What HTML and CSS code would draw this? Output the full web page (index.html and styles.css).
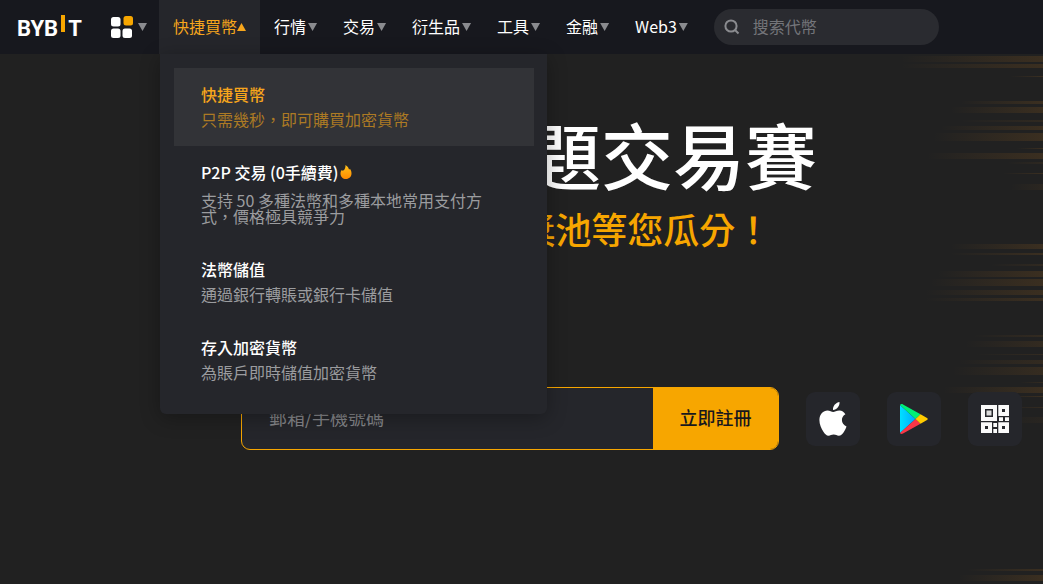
FILE: index.html
```html
<!DOCTYPE html>
<html lang="zh-Hant">
<head>
  <meta charset="UTF-8" />
  <meta name="viewport" content="width=device-width, initial-scale=1.0"/>
  <title>Bybit</title>
  <link rel="stylesheet" href="styles.css">
</head>
<body>
  <header class="header">
    <a class="logo" href="#" aria-label="BYBIT">BYB<span class="logo-bar"></span>T</a>
    <button class="apps" type="button" aria-label="產品">
      <svg width="22" height="22" viewBox="0 0 22 22">
        <rect x="0" y="1" width="9.500" height="9.500" rx="2.500" fill="#fff"/>
        <rect x="12.500" y="0" width="9.500" height="9.500" rx="2.500" fill="#f7a600"/>
        <rect x="0" y="12.500" width="9.500" height="9.500" rx="2.500" fill="#fff"/>
        <rect x="11.500" y="12.500" width="9.500" height="9.500" rx="2.500" fill="#fff"/>
      </svg>
      <span class="arrow"></span>
    </button>

    <nav class="nav">
      <div class="nav-item active">
        <a class="nav-link" href="#">快捷買幣<span class="arrow up"></span></a>
        <div class="dropdown">
          <a class="drop-item selected" href="#">
            <span class="drop-title">快捷買幣</span>
            <span class="drop-desc">只需幾秒，即可購買加密貨幣</span>
          </a>
          <a class="drop-item" href="#">
            <span class="drop-title hot">P2P 交易 (0手續費)
              <svg width="12" height="14" viewBox="0 0 12 14">
                <defs>
                  <linearGradient id="fire" x1="0" y1="0" x2="0" y2="1">
                    <stop offset="0" stop-color="#ffc21a"/>
                    <stop offset="1" stop-color="#ff8a00"/>
                  </linearGradient>
                </defs>
                <path d="M5.500 0C8 1.500 8.700 3 9 4.500C9.500 4.500 9.800 4.200 10 3.800C11 5.300 11.500 6.800 11.500 8.500C11.500 11.700 9 14 6 14C2.900 14 .500 11.700 .500 8.700C.500 7 1 6 1.800 5C2.200 5.600 2.700 5.800 3.300 5.600C4.900 4.600 5.600 2.400 5.500 0Z" fill="url(#fire)"/>
              </svg>
            </span>
            <span class="drop-desc">支持 50 多種法幣和多種本地常用支付方式，價格極具競爭力</span>
          </a>
          <a class="drop-item" href="#">
            <span class="drop-title">法幣儲值</span>
            <span class="drop-desc">通過銀行轉賬或銀行卡儲值</span>
          </a>
          <a class="drop-item" href="#">
            <span class="drop-title">存入加密貨幣</span>
            <span class="drop-desc">為賬戶即時儲值加密貨幣</span>
          </a>
        </div>
      </div>
      <div class="nav-item"><a class="nav-link" href="#">行情<span class="arrow"></span></a></div>
      <div class="nav-item"><a class="nav-link" href="#">交易<span class="arrow"></span></a></div>
      <div class="nav-item"><a class="nav-link" href="#">衍生品<span class="arrow"></span></a></div>
      <div class="nav-item"><a class="nav-link" href="#">工具<span class="arrow"></span></a></div>
      <div class="nav-item"><a class="nav-link" href="#">金融<span class="arrow"></span></a></div>
      <div class="nav-item"><a class="nav-link" href="#">Web3<span class="arrow"></span></a></div>
    </nav>

    <label class="search">
      <svg width="16" height="16" viewBox="0 0 16 16" fill="none" stroke="#8a8b8f" stroke-width="2">
        <circle cx="7" cy="7" r="5.600"/>
        <path d="M11 11L14.500 14.500"/>
      </svg>
      <input type="search" placeholder="搜索代幣" aria-label="搜索代幣">
    </label>
  </header>

  <main class="hero">
    <svg class="streaks" width="143" height="530" viewBox="0 0 143 530" aria-hidden="true">
      <defs>
        <linearGradient id="streak">
          <stop offset="0" stop-color="#f7931a" stop-opacity="0"/>
          <stop offset="1" stop-color="#f7931a" stop-opacity=".12"/>
        </linearGradient>
      </defs>
      <g fill="url(#streak)">
        <rect x="0" y="2" width="143" height="6"/>
        <rect x="0" y="10" width="143" height="4"/>
        <rect x="110" y="22" width="33" height="1"/>
        <rect x="60" y="47" width="83" height="3"/>
        <rect x="50" y="53" width="93" height="6"/>
        <rect x="60" y="66" width="83" height="2" opacity=".6"/>
        <rect x="40" y="72" width="103" height="4"/>
        <rect x="33" y="79" width="110" height="8"/>
        <rect x="117" y="94" width="26" height="1"/>
        <rect x="27" y="99" width="116" height="6"/>
        <rect x="107" y="108" width="36" height="2" opacity=".5"/>
        <rect x="103" y="119" width="40" height="1"/>
        <rect x="110" y="130" width="33" height="6" opacity=".4"/>
        <rect x="50" y="190" width="93" height="5"/>
        <rect x="50" y="199" width="93" height="2"/>
        <rect x="90" y="210" width="53" height="2" opacity=".6"/>
        <rect x="37" y="217" width="106" height="6"/>
        <rect x="30" y="225" width="113" height="7"/>
        <rect x="25" y="236" width="118" height="5"/>
        <rect x="25" y="244" width="118" height="3"/>
        <rect x="73" y="281" width="70" height="2" opacity=".7"/>
        <rect x="65" y="287" width="78" height="6" opacity=".7"/>
        <rect x="75" y="300" width="68" height="1" opacity=".7"/>
        <rect x="58" y="306" width="85" height="4" opacity=".7"/>
        <rect x="52" y="313" width="91" height="8" opacity=".8"/>
        <rect x="120" y="328" width="23" height="1" opacity=".7"/>
        <rect x="43" y="333" width="100" height="6"/>
        <rect x="100" y="342" width="43" height="1"/>
        <rect x="100" y="353" width="43" height="1" opacity=".7"/>
        <rect x="100" y="363" width="43" height="6" opacity=".3"/>
        <rect x="67" y="515" width="76" height="2"/>
        <rect x="58" y="521" width="85" height="6"/>
      </g>
    </svg>

    <h1>新幣種主題交易賽</h1>
    <p class="subtitle">1,000,000 BUSD 獎池等您瓜分！</p>

    <div class="actions">
      <form class="signup">
        <input type="text" placeholder="郵箱/手機號碼" aria-label="郵箱/手機號碼">
        <button type="submit">立即註冊</button>
      </form>
      <a class="store" href="#" aria-label="App Store">
        <svg width="28" height="34" viewBox="0 0 28 34" fill="#fff">
          <path d="M20.500 0C20.700 2 20 4 18.700 5.500C17.500 7 15.700 8 14 7.900C13.800 6 14.600 4 15.800 2.600C17 1.200 19 .200 20.500 0Z"/>
          <path d="M26.400 12.200C24.200 13.500 22.900 15.500 22.900 18.100C22.900 21 24.600 23.300 27.500 24.400C26.900 26.500 25.800 28.600 24.500 30.400C23.200 32.200 21.900 33.700 19.800 33.700C17.700 33.700 17.100 32.500 14.700 32.500C12.300 32.500 11.500 33.700 9.500 33.700C7.400 33.700 6 32 4.600 30C2.200 26.700 .400 22.500 .400 18.100C.400 12 4.400 8.500 8.500 8.500C10.800 8.500 12.700 10 14.200 10C15.600 10 17.700 8.400 20.500 8.400C22.900 8.400 25 9.900 26.400 12.200Z"/>
        </svg>
      </a>
      <a class="store" href="#" aria-label="Google Play">
        <svg width="28" height="30" viewBox="0 0 28 30">
          <defs>
            <linearGradient id="play" x1="0" y1="0" x2="1" y2="0">
              <stop offset="0" stop-color="#00e1ff"/>
              <stop offset="1" stop-color="#00a8ff"/>
            </linearGradient>
          </defs>
          <path d="M0 1V29L15.500 15Z" fill="url(#play)"/>
          <path d="M0 1C.500 0 2 -.200 3 .500L20.500 10.300L15.500 15Z" fill="#00f076"/>
          <path d="M0 29C.500 30.200 2 30.200 3 29.500L20.500 19.700L15.500 15Z" fill="#f93647"/>
          <path d="M20.500 10.300L27 14C28 14.600 28 15.400 27 16L20.500 19.700L15.500 15Z" fill="#ffcb00"/>
        </svg>
      </a>
      <a class="store" href="#" aria-label="QR Code">
        <svg width="28" height="28" viewBox="0 0 28 28">
          <path d="M0 0H16V16H0ZM17.300 0H28V11H17.300ZM0 17.300H11V28H0ZM17.300 17.300H28V28H17.300ZM18 12.300H22V16H18ZM24 12.300H28V16H24ZM12.300 18H16V22H12.300ZM12.300 24H16V28H12.300Z" fill="#fafafa"/>
          <path d="M4 4H12V12H4ZM21 4H24V7H21ZM4 21H7V24H4ZM21 21H24V24H21Z" fill="#25262b"/>
          <path d="M5.500 5.500H10.500V10.500H5.500Z" fill="#dcdcdc"/>
        </svg>
      </a>
    </div>
  </main>
</body>
</html>
```
FILE: styles.css
```css
* {
  box-sizing: border-box;
}
body {
  display: flex;
  flex-direction: column;
  min-height: 100vh;
  margin: 0;
  background-color: #212121;
  color: #fff;
  font-family: "Noto Sans CJK TC", sans-serif;
  font-size: 16px;
}
a {
  color: inherit;
  text-decoration: none;
}
button, input {
  font-family: inherit;
  border: none;
}
.header {
  display: flex;
  align-items: center;
  height: 54px;
  padding-left: 17px;
  background-color: #17181e;
}
.logo {
  display: flex;
  align-items: center;
  width: 94px;
  padding-top: 4px;
  font-family: Roboto, sans-serif;
  font-size: 22px;
  font-weight: 700;
  line-height: 26px;
}
.logo-bar {
  width: 4px;
  height: 17px;
  margin: 0 3px 12px 3px;
  background-color: #f7a600;
}
.apps {
  display: flex;
  align-items: center;
  gap: 5px;
  width: 48px;
  padding: 0;
  background: none;
  cursor: pointer;
}
.arrow {
  width: 9px;
  height: 8px;
  background-color: #8a8b8f;
  clip-path: polygon(0 0, 100% 0, 50% 100%);
}
.arrow.up {
  background-color: #f7a61c;
  clip-path: polygon(50% 0, 100% 100%, 0 100%);
}
.nav {
  display: flex;
  height: 100%;
}
.nav-item {
  position: relative;
}
.nav-link {
  display: flex;
  align-items: center;
  gap: 2px;
  height: 100%;
  padding: 0 12px 2px 14px;
  white-space: nowrap;
}
.nav-link .arrow {
  margin-top: 2px;
}
.active {
  background-color: #25262b;
}
.active .nav-link {
  gap: 0;
  padding-right: 14px;
  color: #f7a61c;
}
.search {
  display: flex;
  align-items: center;
  gap: 13px;
  width: 225px;
  height: 36px;
  margin-left: 14px;
  padding: 0 10px;
  border-radius: 18px;
  background-color: #2a2b30;
}
.search svg {
  flex-shrink: 0;
}
.search input {
  width: 100%;
  padding: 0 0 2px;
  background: none;
  color: #fff;
  font-size: 16px;
  outline: none;
}
.search input::placeholder {
  color: #74757a;
}

/* dropdown under the active nav item */
.dropdown {
  position: absolute;
  top: 100%;
  left: 1px;
  z-index: 10;
  width: 387px;
  padding: 14px 13px 15px 14px;
  border-radius: 0 0 6px 6px;
  background-color: #25262b;
  box-shadow: 0 4px 20px rgba(0, 0, 0, 0.3);
}
.drop-item {
  display: flex;
  flex-direction: column;
  gap: 8px;
  padding: 17px 27px 19px;
}
.drop-title {
  font-weight: 500;
  line-height: 18px;
}
.hot {
  display: flex;
  align-items: center;
  gap: 1px;
  height: 18px;
  margin-bottom: 3px;
}
.drop-desc {
  max-width: 290px;
  color: #9b9c9f;
  line-height: 16px;
}
.selected {
  background-color: #323337;
}
.selected .drop-title {
  color: #f7a61c;
}
.selected .drop-desc {
  color: #ac7a24;
}

.hero {
  position: relative;
  flex: 1;
  padding: 55px 21px 55px 241px;
  overflow: hidden;
}
.streaks {
  position: absolute;
  top: 0;
  right: 0;
}
h1 {
  margin: 0;
  font-size: 72px;
  font-weight: 500;
  line-height: 88px;
  white-space: nowrap;
}
.subtitle {
  margin: 9px 0 137px;
  color: #f7a600;
  font-size: 36px;
  font-weight: 500;
  line-height: 44px;
  white-space: nowrap;
}
.actions {
  position: relative;
  display: flex;
  align-items: center;
  gap: 27px;
}
.signup {
  display: flex;
  flex: 1;
  max-width: 538px;
  height: 63px;
  border: 1px solid #f7a600;
  border-radius: 9px;
  background-color: #25262b;
  overflow: hidden;
}
.signup input {
  flex: 1;
  min-width: 0;
  padding: 0 27px 3px;
  background: none;
  color: #fff;
  font-size: 18px;
  outline: none;
}
.signup input::placeholder {
  color: #85868a;
}
.signup button {
  width: 125px;
  padding: 0 0 3px;
  background-color: #f7a600;
  color: #17181e;
  font-size: 18px;
  font-weight: 500;
  cursor: pointer;
}
.store {
  display: flex;
  align-items: center;
  justify-content: center;
  width: 54px;
  height: 54px;
  border-radius: 9px;
  background-color: #25262b;
}
```
